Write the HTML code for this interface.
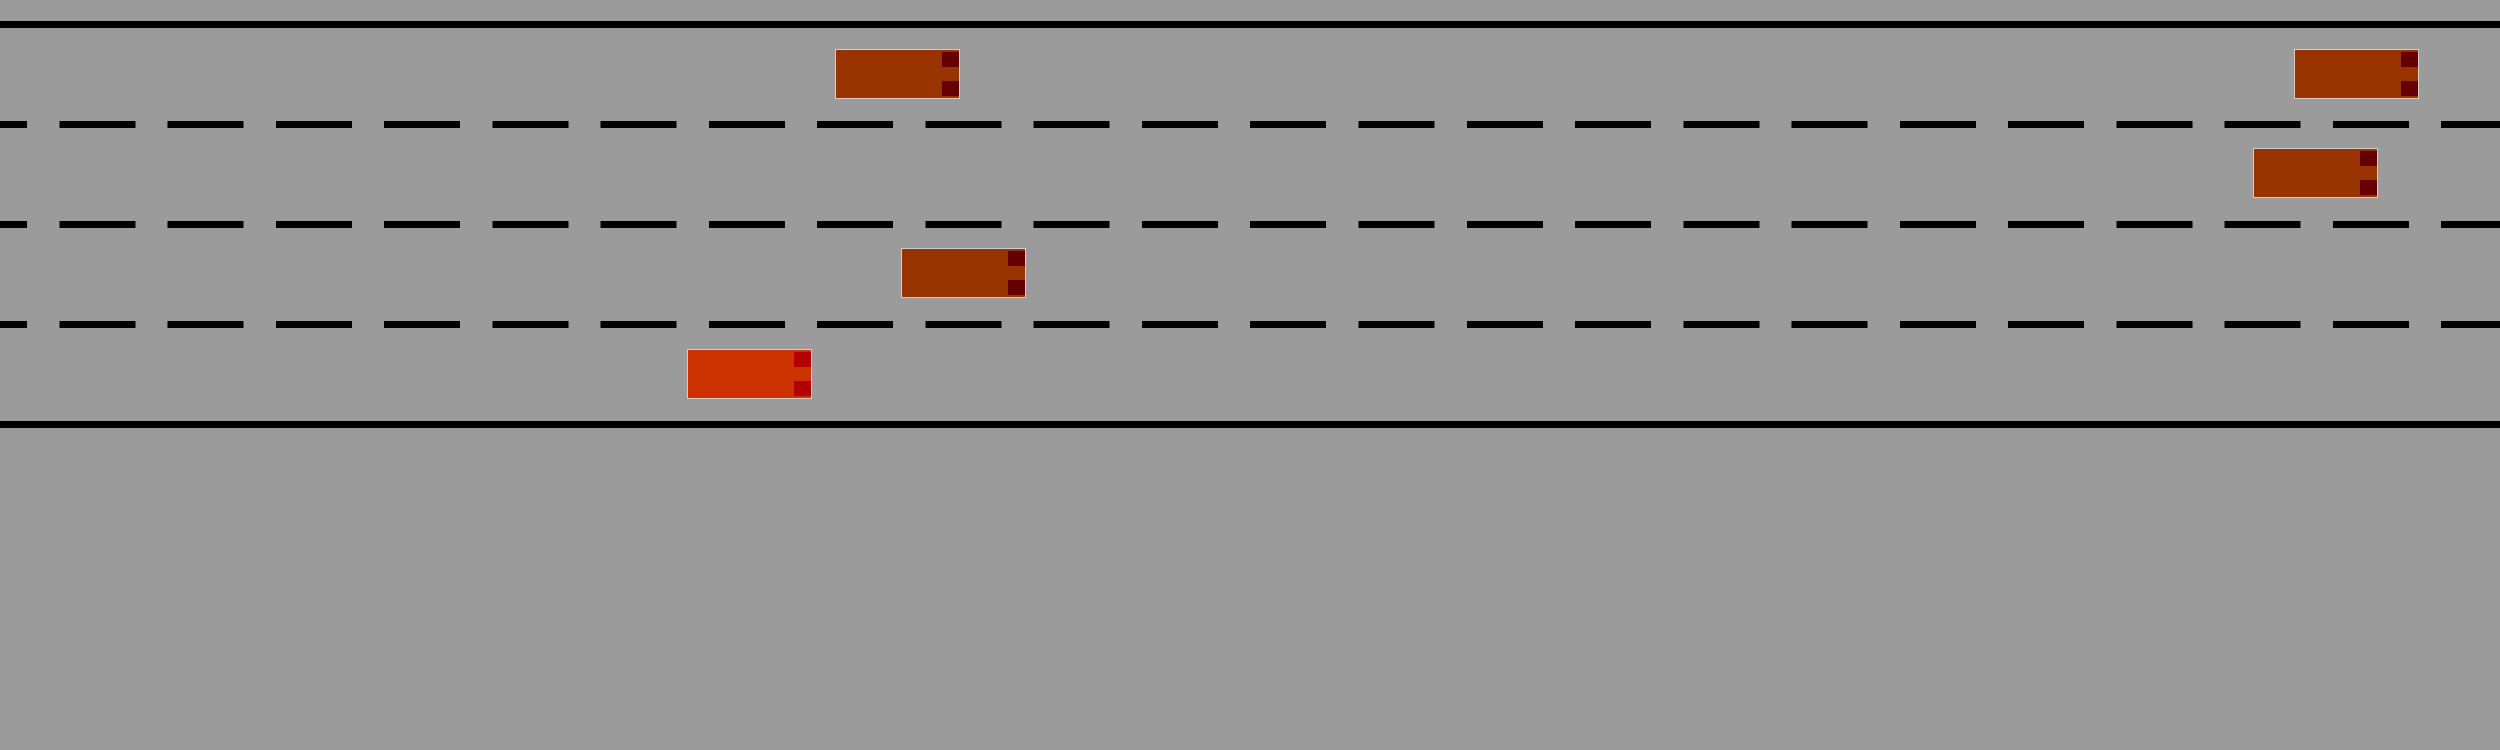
<!DOCTYPE html>
<html><head><style>
html,body{margin:0;padding:0}
body{width:2500px;height:750px;background:#9b9b9b;position:relative;overflow:hidden}
.l{position:absolute;left:0;width:2500px;height:7px;background:#000}
.d{position:absolute;left:-49.27px;width:2600px;height:7px;background:repeating-linear-gradient(90deg,#000 0 76px,transparent 76px 108.27px)}
.c{position:absolute;width:123px;height:48px;border:1px solid #cfcfcf;background:#993300}
.c i{position:absolute;right:0;width:17px;height:15px;background:#660000}
.c i.a{top:2px}.c i.b{top:31px}
.r{background:#cc3300}.r i{background:#b30000}
</style></head><body>
<div class="l" style="top:21px"></div>
<div class="d" style="top:121px"></div>
<div class="d" style="top:221px"></div>
<div class="d" style="top:321px"></div>
<div class="l" style="top:421px"></div>
<div class="c" style="left:835px;top:49px"><i class="a"></i><i class="b"></i></div>
<div class="c" style="left:2294px;top:49px"><i class="a"></i><i class="b"></i></div>
<div class="c" style="left:2253px;top:148px"><i class="a"></i><i class="b"></i></div>
<div class="c" style="left:901px;top:248px"><i class="a"></i><i class="b"></i></div>
<div class="c r" style="left:687px;top:349px"><i class="a"></i><i class="b"></i></div>
</body></html>
